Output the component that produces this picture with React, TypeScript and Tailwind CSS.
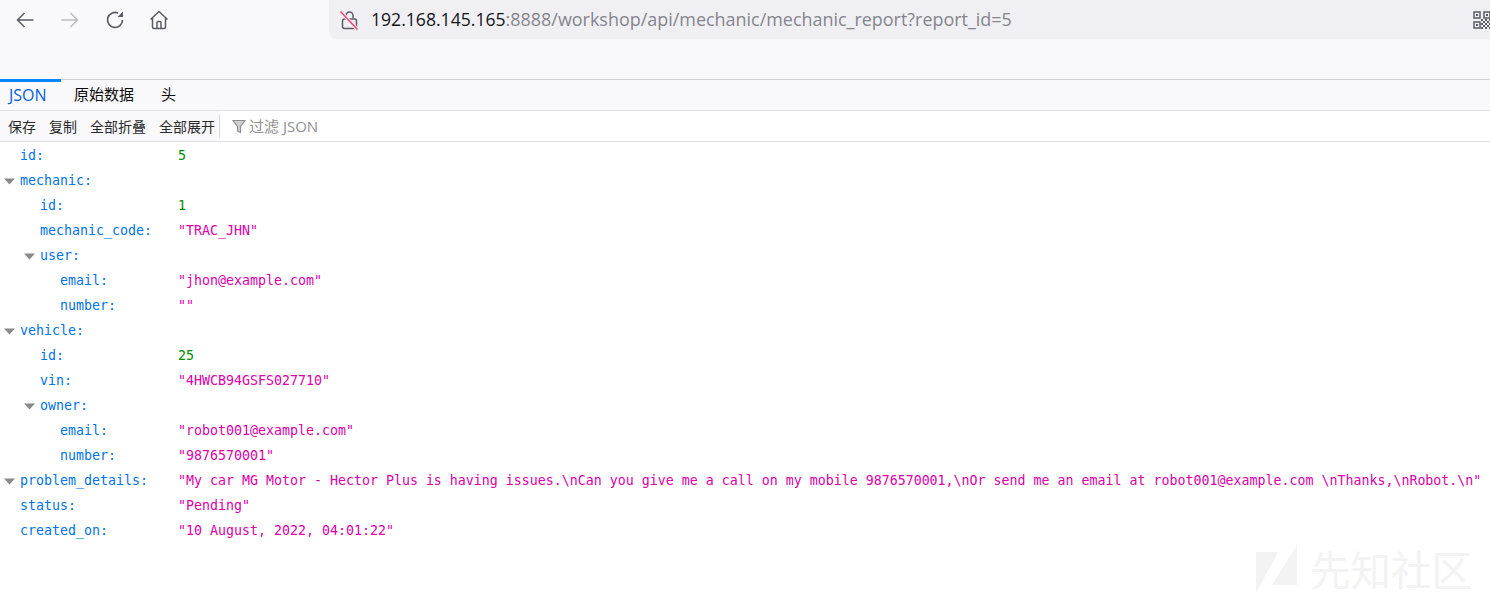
import React from "react";

const mono = "font-['DejaVu_Sans_Mono','Liberation_Mono',monospace]";
const ui = "font-['Open_Sans','Noto_Sans_CJK_SC',sans-serif]";

type Row = { k: string; d: number; v?: string; t?: "n" | "s"; open?: boolean };

const rows: Row[] = [
  { k: "id", d: 0, v: "5", t: "n" },
  { k: "mechanic", d: 0, open: true },
  { k: "id", d: 1, v: "1", t: "n" },
  { k: "mechanic_code", d: 1, v: '"TRAC_JHN"', t: "s" },
  { k: "user", d: 1, open: true },
  { k: "email", d: 2, v: '"jhon@example.com"', t: "s" },
  { k: "number", d: 2, v: '""', t: "s" },
  { k: "vehicle", d: 0, open: true },
  { k: "id", d: 1, v: "25", t: "n" },
  { k: "vin", d: 1, v: '"4HWCB94GSFS027710"', t: "s" },
  { k: "owner", d: 1, open: true },
  { k: "email", d: 2, v: '"robot001@example.com"', t: "s" },
  { k: "number", d: 2, v: '"9876570001"', t: "s" },
  {
    k: "problem_details",
    d: 0,
    open: true,
    v: '"My car MG Motor - Hector Plus is having issues.\\nCan you give me a call on my mobile 9876570001,\\nOr send me an email at robot001@example.com \\nThanks,\\nRobot.\\n"',
    t: "s",
  },
  { k: "status", d: 0, v: '"Pending"', t: "s" },
  { k: "created_on", d: 0, v: '"10 August, 2022, 04:01:22"', t: "s" },
];

const indent = ["pl-5", "pl-10", "pl-[60px]"];
const twisty = ["left-[4px]", "left-[24px]", "left-[44px]"];

function Twisty({ d }: { d: number }) {
  return (
    <svg width="11" height="7" viewBox="0 0 11 7" className={`absolute top-[10px] ${twisty[d]}`}>
      <path d="M0 0.5H11L5.500 6.500Z" fill="#8a8a8e" />
    </svg>
  );
}

function JsonRow({ r }: { r: Row }) {
  return (
    <div className={`relative flex h-[25px] items-center whitespace-nowrap text-[13.29px] ${mono}`}>
      {r.open && <Twisty d={r.d} />}
      <div className={`w-[178px] shrink-0 text-[#0074e8] ${indent[r.d]}`}>{r.k}:</div>
      {r.v && <span className={r.t === "n" ? "text-[#058b00]" : "text-[#dd00a9]"}>{r.v}</span>}
    </div>
  );
}

function Nav() {
  return (
    <div className="flex h-[39px] items-center">
      <div className="flex w-[329px] shrink-0 items-center">
        <svg width="20" height="20" viewBox="0 0 20 20" fill="none" stroke="#5b5b66" strokeWidth="1.5" className="ml-[15px]">
          <path d="M18.5 10H2.5M9.5 3L2.5 10L9.5 17" />
        </svg>
        <svg width="20" height="20" viewBox="0 0 20 20" fill="none" stroke="#bdbdc2" strokeWidth="1.5" className="ml-[25px]">
          <path d="M1.5 10H17.5M10.5 3L17.5 10L10.5 17" />
        </svg>
        <svg width="20" height="20" viewBox="0 0 20 20" fill="none" stroke="#5b5b66" strokeWidth="1.7" className="ml-[25px]">
          <path d="M17.5 10A7.5 7.5 0 1 1 13 3.1" />
          <path d="M18 1.5V7H12.5Z" fill="#5b5b66" stroke="none" />
        </svg>
        <svg width="20" height="20" viewBox="0 0 20 20" fill="none" stroke="#5b5b66" strokeWidth="1.5" className="ml-[24px]">
          <path d="M1.5 9.5L10 1.5L18.5 9.5M3.5 8V17A1.5 1.5 0 0 0 5 18.500H15A1.500 1.500 0 0 0 16.500 17V8M8 18.500V12.500A1 1 0 0 1 9 11.500H11A1 1 0 0 1 12 12.500V18.500" />
        </svg>
      </div>
      <div className="flex h-[39px] flex-1 items-center rounded-bl-lg bg-[#f0f0f4]">
        <svg width="20" height="20" viewBox="0 0 20 20" fill="none" className="ml-[10px]">
          <path d="M7 8V5.500A3.500 3.500 0 0 1 14 5.500V8" stroke="#5b5b66" strokeWidth="1.500" />
          <rect x="3.500" y="9" width="14" height="9.500" rx="2" stroke="#5b5b66" strokeWidth="1.500" />
          <path d="M2 2L18 19" stroke="#f0f0f4" strokeWidth="3.500" />
          <path d="M1.500 1.500L18.500 19.500" stroke="#ff3f6e" strokeWidth="1.500" />
        </svg>
        <div className={`ml-[12px] whitespace-nowrap ${ui}`}>
          <span className="text-[17.6px] text-[#15141a]">192.168.145.165</span>
          <span className="text-[17.96px] text-[#85858c]">:8888/workshop/api/mechanic/mechanic_report?report_id=5</span>
        </div>
        <div className="flex-1" />
        <svg width="18" height="18" viewBox="0 0 18 18" className="mr-[-1px] shrink-0">
          <g fill="none" stroke="#5b5b66" strokeWidth="1.500">
            <rect x="1" y="1" width="6" height="6" />
            <rect x="11" y="1" width="6" height="6" />
            <rect x="1" y="11" width="6" height="6" />
          </g>
          <g fill="#5b5b66">
            <rect x="3" y="3" width="2" height="2" />
            <rect x="13" y="3" width="2" height="2" />
            <rect x="3" y="13" width="2" height="2" />
            <rect x="8" y="8" width="2" height="2" />
            <rect x="10" y="10" width="2" height="2" />
            <rect x="12" y="8" width="2" height="2" />
            <rect x="14" y="10" width="2" height="2" />
            <rect x="16" y="8" width="2" height="2" />
            <rect x="8" y="12" width="2" height="2" />
            <rect x="12" y="12" width="2" height="2" />
            <rect x="16" y="12" width="2" height="2" />
            <rect x="10" y="14" width="2" height="2" />
            <rect x="14" y="14" width="2" height="2" />
            <rect x="8" y="16" width="2" height="2" />
            <rect x="12" y="16" width="2" height="2" />
            <rect x="16" y="16" width="2" height="2" />
          </g>
        </svg>
      </div>
    </div>
  );
}

export default function App() {
  return (
    <div className={`relative h-[598px] w-[1490px] overflow-hidden bg-white ${ui}`}>
      <div className="h-[79px] bg-[#f9f9fb]">
        <Nav />
      </div>
      <div className="flex h-[32px] border-y border-y-[#d0d0d4] border-b-[#e0e0e2] bg-[#f9f9fb] text-[15px] text-[#0c0c0d]">
        <div className="mt-[-1px] flex h-full w-[61px] items-center border-t-[3px] border-[#0a84ff] pb-[2px] pl-[9px] text-[16px] text-[#0060df]">
          JSON
        </div>
        <div className="ml-[13px] flex items-center pb-[2px]">原始数据</div>
        <div className="ml-[27px] flex items-center pb-[2px]">头</div>
      </div>
      <div className="flex h-[31px] items-center border-b border-[#e0e0e2] bg-[#f9f9fb] text-[14px] text-[#2a2a2e]">
        <span className="ml-[8px]">保存</span>
        <span className="ml-[13px]">复制</span>
        <span className="ml-[13px]">全部折叠</span>
        <span className="ml-[13px]">全部展开</span>
        <div className="ml-[4px] h-[22px] w-px bg-[#d7d7db]" />
        <div className="flex h-full flex-1 items-center bg-white">
          <svg width="14" height="15" viewBox="0 0 14 15" className="ml-[12px]">
            <path d="M1 1.500H13L8.500 7.500V13.500L5.500 12V7.500Z" fill="#d0d0d2" stroke="#8f8f93" strokeWidth="1.200" />
          </svg>
          <span className="ml-[3px] text-[15px] text-[#8f8f93]">过滤 JSON</span>
        </div>
      </div>
      <div className="pt-px">
        {rows.map((r, i) => (
          <JsonRow key={i} r={r} />
        ))}
      </div>
      <div className="absolute left-[1256px] top-[544px] flex items-center">
        <svg width="42" height="50" viewBox="0 0 42 50">
          <path d="M0 8H22L0 49Z M41 1V41H16Z" fill="#f3f3f3" />
        </svg>
        <span className="ml-[12px] text-[40.5px] leading-none text-[#f3f3f3] font-['Noto_Sans_CJK_SC',sans-serif]">先知社区</span>
      </div>
    </div>
  );
}
